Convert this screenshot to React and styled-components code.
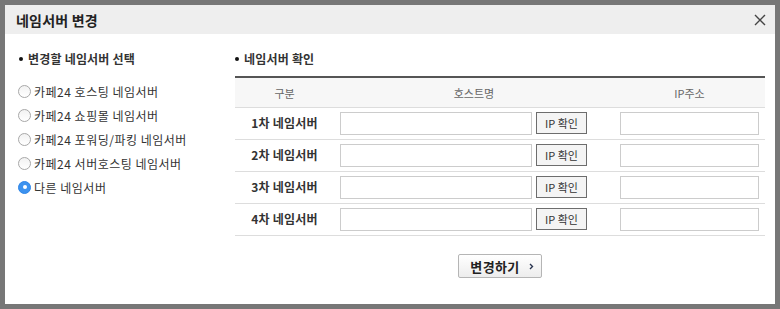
import React, { useState } from 'react';
import styled, { createGlobalStyle } from 'styled-components';

const GlobalStyle = createGlobalStyle`
  html, body {
    margin: 0;
    padding: 0;
    background: #777777;
  }
  body {
    font-family: 'Noto Sans CJK KR', 'Noto Sans', sans-serif;
    font-size: 12px;
    color: #333;
  }
`;

const Frame = styled.div`
  width: 780px;
  height: 309px;
  padding: 5px;
  box-sizing: border-box;
`;

const Dialog = styled.div`
  width: 770px;
  height: 299px;
  background: #fff;
  display: flex;
  flex-direction: column;
`;

const Header = styled.div`
  height: 29px;
  background: #eeeeee;
  display: flex;
  align-items: center;
  justify-content: space-between;
  padding: 0 9px 0 11px;
`;

const Title = styled.h1`
  margin: 0;
  font-size: 14px;
  font-weight: 700;
  color: #222;
  letter-spacing: 0.2px;
`;

const CloseButton = styled.button`
  border: none;
  background: none;
  padding: 0;
  width: 12px;
  height: 12px;
  display: flex;
  margin-top: 1px;
  cursor: pointer;
`;

const Body = styled.div`
  display: grid;
  grid-template-columns: 230px 530px;
  padding-top: 16px;
`;

const LeftCol = styled.div`
  padding-left: 14px;
`;

const SectionTitle = styled.h2`
  margin: 0;
  font-size: 12px;
  font-weight: 700;
  color: #333;
  line-height: 18px;
  display: flex;
  align-items: center;
  gap: 5px;
  letter-spacing: 0.2px;

  &::before {
    content: '';
    width: 4px;
    height: 4px;
    border-radius: 50%;
    background: #111;
  }
`;

const RadioList = styled.ul`
  list-style: none;
  margin: 14px 0 0;
  padding: 0;
  display: flex;
  flex-direction: column;
  gap: 6px;
`;

const RadioItem = styled.li`
  height: 18px;
  display: flex;
  align-items: center;
  gap: 3px;
  color: #333;
  cursor: pointer;
  letter-spacing: 0.5px;
  margin-left: -1px;
`;

const RadioMark = styled.span`
  width: 13px;
  height: 13px;
  border-radius: 50%;
  box-sizing: border-box;
  border: 1px solid ${p => (p.$checked ? '#2f86e8' : '#a8a8a8')};
  background: ${p => (p.$checked ? '#3c92ef' : 'linear-gradient(#f2f2f2, #ffffff)')};
  display: flex;
  align-items: center;
  justify-content: center;

  &::after {
    content: '';
    width: 4px;
    height: 4px;
    border-radius: 50%;
    background: #fff;
    display: ${p => (p.$checked ? 'block' : 'none')};
  }
`;

const RightCol = styled.div`
  display: flex;
  flex-direction: column;
`;

const Table = styled.table`
  margin-top: 8px;
  width: 530px;
  border-collapse: collapse;
  border-top: 2px solid #555;
`;

const HeadCell = styled.th`
  height: 29px;
  padding: 0;
  background: #f7f7f7;
  font-weight: 400;
  color: #666;
  font-size: 11px;
  border-bottom: 1px solid #dddddd;
  position: relative;
  width: ${p => p.$w}px;

  & + &::before {
    content: '';
    position: absolute;
    left: 0;
    top: 9px;
    height: 13px;
    border-left: 1px solid #dddddd;
  }
`;

const Row = styled.tr`
  height: 32px;
  border-bottom: 1px solid #dddddd;
`;

const LabelCell = styled.td`
  text-align: center;
  font-weight: 700;
  color: #333;
  padding: 0 0 3px;
  letter-spacing: 0.2px;
`;

const HostCell = styled.td`
  padding: 0 0 0 6px;
`;

const HostWrap = styled.div`
  display: flex;
  align-items: center;
  gap: 4px;
`;

const TextInput = styled.input`
  width: ${p => p.$w}px;
  height: 23px;
  box-sizing: border-box;
  border: 1px solid #cccccc;
  padding: 0 4px;
  font: inherit;
  outline: none;
  margin: 0;
`;

const IpButton = styled.button`
  width: 51px;
  height: 22px;
  box-sizing: border-box;
  border: 1px solid #6d6d6d;
  background: #f4f4f4;
  font-family: inherit;
  font-size: 11px;
  color: #333;
  padding: 0;
  margin-top: -1px;
  cursor: pointer;
`;

const IpCell = styled.td`
  padding: 0 0 0 6px;
`;

const Actions = styled.div`
  display: flex;
  justify-content: center;
  padding-top: 18px;
`;

const SubmitButton = styled.button`
  width: 84px;
  height: 24px;
  box-sizing: border-box;
  border: 1px solid #b5b5b5;
  border-radius: 2px;
  background: linear-gradient(#ffffff, #ededed);
  font-family: inherit;
  font-size: 13px;
  font-weight: 700;
  color: #222;
  display: flex;
  align-items: center;
  justify-content: center;
  gap: 9px;
  padding: 0 0 0 4px;
  letter-spacing: 0.4px;
  cursor: pointer;
`;

const options = [
  '카페24 호스팅 네임서버',
  '카페24 쇼핑몰 네임서버',
  '카페24 포워딩/파킹 네임서버',
  '카페24 서버호스팅 네임서버',
  '다른 네임서버',
];

const rows = ['1차 네임서버', '2차 네임서버', '3차 네임서버', '4차 네임서버'];

const App = () => {
  const [selected, setSelected] = useState(4);

  return (
    <>
      <GlobalStyle />
      <Frame>
        <Dialog>
          <Header>
            <Title>네임서버 변경</Title>
            <CloseButton aria-label="닫기">
              <svg width="12" height="12" viewBox="0 0 12 12">
                <path d="M1 1 L11 11 M11 1 L1 11" stroke="#444" strokeWidth="1.4" fill="none" />
              </svg>
            </CloseButton>
          </Header>
          <Body>
            <LeftCol>
              <SectionTitle>변경할 네임서버 선택</SectionTitle>
              <RadioList>
                {options.map((label, i) => (
                  <RadioItem key={label} onClick={() => setSelected(i)}>
                    <RadioMark $checked={selected === i} />
                    {label}
                  </RadioItem>
                ))}
              </RadioList>
            </LeftCol>
            <RightCol>
              <SectionTitle>네임서버 확인</SectionTitle>
              <Table>
                <thead>
                  <tr>
                    <HeadCell $w={99}>구분</HeadCell>
                    <HeadCell $w={280}>호스트명</HeadCell>
                    <HeadCell $w={151}>IP주소</HeadCell>
                  </tr>
                </thead>
                <tbody>
                  {rows.map(label => (
                    <Row key={label}>
                      <LabelCell>{label}</LabelCell>
                      <HostCell>
                        <HostWrap>
                          <TextInput $w={192} />
                          <IpButton>IP 확인</IpButton>
                        </HostWrap>
                      </HostCell>
                      <IpCell>
                        <TextInput $w={139} />
                      </IpCell>
                    </Row>
                  ))}
                </tbody>
              </Table>
              <Actions>
                <SubmitButton>
                  변경하기
                  <svg width="5" height="7" viewBox="0 0 5 7">
                    <path d="M1 1 L3.5 3.5 L1 6" stroke="#2a3550" strokeWidth="1.4" fill="none" />
                  </svg>
                </SubmitButton>
              </Actions>
            </RightCol>
          </Body>
        </Dialog>
      </Frame>
    </>
  );
};

export default App;
